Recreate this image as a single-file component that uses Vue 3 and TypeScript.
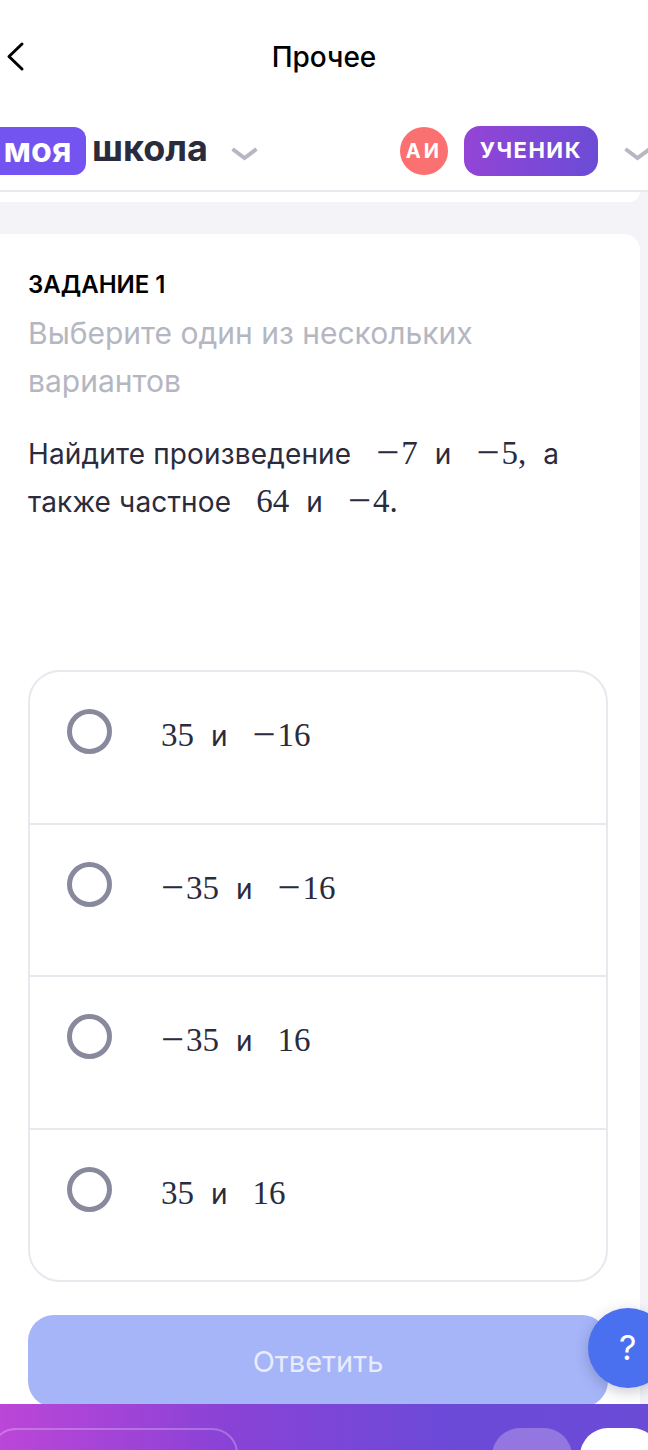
<script setup lang="ts">
interface Part {
  kind: "lead" | "word" | "math";
  text: string;
  minus?: boolean;
}

const lead = (text: string): Part => ({ kind: "lead", text });
const word = (text: string): Part => ({ kind: "word", text });
const num = (text: string): Part => ({ kind: "math", text });
const neg = (text: string): Part => ({ kind: "math", text, minus: true });

const questionLines: Part[][] = [
  [lead("Найдите произведение"), neg("7"), word("и"), neg("5,"), word("а")],
  [lead("также частное"), num("64"), word("и"), neg("4.")],
];

const options: Part[][] = [
  [num("35"), word("и"), neg("16")],
  [neg("35"), word("и"), neg("16")],
  [neg("35"), word("и"), num("16")],
  [num("35"), word("и"), num("16")],
];
</script>

<template>
  <div class="page">
    <header class="topbar">
      <svg class="back" width="20" height="32" viewBox="0 0 20 32">
        <path d="M17 3 L4 15.5 L17 28" fill="none" stroke="#000" stroke-width="3" stroke-linecap="round" stroke-linejoin="round" />
      </svg>
      <span class="title">Прочее</span>
    </header>

    <div class="school-bar">
      <div class="logo">
        <span class="logo-badge">моя</span>
        <span class="logo-text">школа</span>
      </div>
      <svg class="chev chev-school" width="27" height="14" viewBox="0 0 27 14">
        <path d="M1.5 2 L13.5 11 L25.5 2" fill="none" stroke="#b7b7c2" stroke-width="4" />
      </svg>
      <div class="avatar">АИ</div>
      <div class="role">УЧЕНИК</div>
      <svg class="chev chev-role" width="27" height="14" viewBox="0 0 27 14">
        <path d="M1.5 2 L13.5 11 L25.5 2" fill="none" stroke="#b7b7c2" stroke-width="4" />
      </svg>
    </div>

    <main class="content">
      <div class="strip"></div>
      <section class="card">
        <h2 class="task-title">ЗАДАНИЕ 1</h2>
        <p class="hint">Выберите один из нескольких вариантов</p>
        <div class="question">
          <div v-for="(line, i) in questionLines" :key="i" class="formula">
            <span v-for="(part, j) in line" :key="j" :class="part.kind"><span v-if="part.minus" class="minus">−</span>{{ part.text }}</span>
          </div>
        </div>

        <div class="options">
          <div v-for="(option, i) in options" :key="i" class="option">
            <span class="radio"></span>
            <div class="formula option-text">
              <span v-for="(part, j) in option" :key="j" :class="part.kind"><span v-if="part.minus" class="minus">−</span>{{ part.text }}</span>
            </div>
          </div>
        </div>

        <button class="answer" type="button">Ответить</button>
      </section>
    </main>

    <div class="help">?</div>

    <footer class="footer">
      <div class="footer-outline"></div>
      <div class="footer-btn muted"></div>
      <div class="footer-btn light"></div>
    </footer>
  </div>
</template>

<style>
html,
body {
  margin: 0;
  background: #fff;
}
</style>

<style scoped>
.page {
  position: relative;
  width: 648px;
  height: 1450px;
  overflow: hidden;
  background: #f3f3f8;
  font-family: Inter, "Noto Sans", sans-serif;
  color: #2a2b3c;
}

.topbar {
  position: relative;
  display: flex;
  align-items: center;
  justify-content: center;
  height: 114px;
  background: #fff;
}

.back {
  position: absolute;
  left: 5px;
  top: 41px;
}

.title {
  font-size: 28px;
  font-weight: 500;
  color: #000;
}

.school-bar {
  display: flex;
  align-items: center;
  height: 78px;
  padding-bottom: 2px;
  box-sizing: border-box;
  background: #fff;
  border-bottom: 2px solid #e8e8ee;
}

.logo {
  display: flex;
  flex: none;
  align-items: center;
  margin-left: -14px;
}

.logo-badge {
  display: block;
  width: 100px;
  height: 48px;
  line-height: 45px;
  text-align: center;
  border-radius: 12px;
  background: #7354f0;
  color: #fff;
  font-size: 34px;
  font-weight: 700;
  padding-left: 3px;
  box-sizing: border-box;
}

.logo-text {
  margin-left: 6px;
  font-size: 36px;
  font-weight: 700;
  color: #2a2b3c;
  line-height: 44px;
  margin-top: -6px;
}

.chev {
  flex: none;
}

.chev-school {
  margin-left: 23px;
  margin-top: 6px;
}

.avatar {
  flex: none;
  width: 48px;
  height: 48px;
  margin-left: 142px;
  border-radius: 50%;
  background: #fb7070;
  color: #fff;
  font-size: 20px;
  font-weight: 700;
  letter-spacing: 3px;
  text-align: center;
  line-height: 48px;
}

.role {
  flex: none;
  width: 134px;
  height: 50px;
  margin-left: 16px;
  border-radius: 16px;
  background: linear-gradient(100deg, #9544d6, #6a4cd6);
  color: #fff;
  font-size: 22px;
  font-weight: 700;
  letter-spacing: 1.5px;
  text-align: center;
  line-height: 48px;
}

.chev-role {
  margin-left: 26px;
  margin-top: 6px;
}

.content {
  display: flex;
  flex-direction: column;
}

.strip {
  width: 654px;
  height: 10px;
  margin-left: -14px;
  background: #fff;
  border-radius: 0 0 16px 16px;
}

.card {
  width: 640px;
  height: 1300px;
  margin-top: 32px;
  padding: 36px 32px 0 28px;
  box-sizing: border-box;
  background: #fff;
  border-radius: 0 16px 0 0;
}

.task-title {
  margin: 0;
  font-size: 24px;
  line-height: 29px;
  font-weight: 600;
  color: #000;
}

.hint {
  margin: 10px 0 0;
  width: 520px;
  font-size: 30px;
  line-height: 48px;
  color: #b4b6c2;
}

.question {
  margin: 25px 0 0;
  font-size: 28px;
  line-height: 47px;
  letter-spacing: 0.15px;
  color: #2a2b3c;
}

.formula {
  display: flex;
  align-items: baseline;
  white-space: nowrap;
}

.lead {
  margin-right: 25px;
}

.word {
  margin: 0 25px 0 17px;
}

.math {
  font-family: "Liberation Serif", serif;
  font-size: 33px;
  letter-spacing: 0;
}

.minus {
  display: inline-block;
  width: 25px;
  font-size: 41px;
  line-height: 1;
  vertical-align: -2px;
}

.options {
  width: 580px;
  height: 612px;
  margin-top: 144px;
  box-sizing: border-box;
  border: 2px solid #e8e8ee;
  border-radius: 32px;
  display: flex;
  flex-direction: column;
}

.option {
  display: flex;
  align-items: flex-start;
  flex: 1;
  box-sizing: border-box;
  padding: 37px 0 0 37px;
  border-bottom: 2px solid #e8e8ee;
}

.option:last-child {
  border-bottom: 0;
}

.radio {
  flex: none;
  width: 45px;
  height: 45px;
  box-sizing: border-box;
  border: 5px solid #88899c;
  border-radius: 50%;
}

.option-text {
  margin-left: 49px;
  margin-top: 2px;
  font-size: 28px;
  line-height: 48px;
}

.answer {
  display: block;
  width: 580px;
  height: 92px;
  margin-top: 33px;
  border: 0;
  border-radius: 26px;
  background: #a5b5f8;
  color: #e8ecfe;
  font-family: inherit;
  font-size: 29px;
}

.help {
  position: absolute;
  left: 588px;
  top: 1308px;
  width: 80px;
  height: 80px;
  border-radius: 50%;
  background: #4a6fef;
  box-shadow: 0 4px 14px rgba(40, 40, 80, 0.25);
  color: #fff;
  font-size: 34px;
  line-height: 80px;
  padding-left: 31px;
  box-sizing: border-box;
}

.footer {
  position: absolute;
  left: 0;
  right: 0;
  bottom: 0;
  height: 46px;
  display: flex;
  align-items: flex-start;
  padding-top: 24px;
  box-sizing: border-box;
  background: linear-gradient(90deg, #bb46d8, #8a42d6 35%, #6b4ad8 70%, #6a4bd6);
}

.footer-outline {
  flex: none;
  width: 248px;
  height: 60px;
  margin-left: -10px;
  box-sizing: border-box;
  border: 2px solid rgba(255, 255, 255, 0.25);
  border-radius: 26px;
}

.footer-btn {
  flex: none;
  width: 80px;
  height: 60px;
  border-radius: 28px;
}

.muted {
  margin-left: 254px;
  background: #9476e0;
}

.light {
  margin-left: 8px;
  background: #fff;
}
</style>
